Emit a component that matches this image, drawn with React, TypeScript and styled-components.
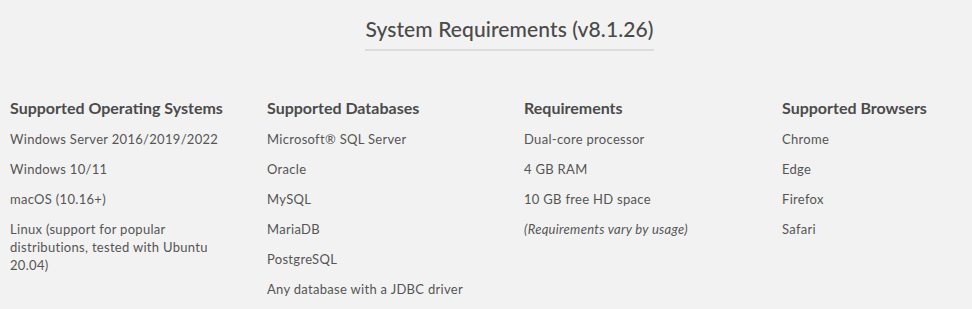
import React from "react";
import styled, { createGlobalStyle } from "styled-components";

const GlobalStyle = createGlobalStyle`
  html, body {
    margin: 0;
    padding: 0;
    background: #f2f2f2;
    overflow: hidden;
  }
  body {
    font-family: Lato, "Liberation Sans", sans-serif;
    color: #555;
  }
`;

const Section = styled.section`
  width: 1019px;
  padding-top: 15px;
`;

const TitleWrap = styled.div`
  display: flex;
  justify-content: center;
`;

const Title = styled.h2`
  margin: 0;
  padding-bottom: 6px;
  font-size: 21px;
  font-weight: 500;
  line-height: 28px;
  letter-spacing: 0.1px;
  color: #4a4a4a;
  border-bottom: 2px solid #dcdcdc;
`;

const Grid = styled.div`
  display: grid;
  grid-template-columns: 257px 257px 258px 257px;
  padding: 0 0 0 10px;
  margin-top: 47px;
`;

const Column = styled.div`
  display: flex;
  flex-direction: column;
`;

const Heading = styled.h3`
  margin: 0 0 12px;
  font-size: 16px;
  font-weight: 700;
  line-height: 20px;
  color: #4b4b4b;
`;

const Item = styled.div<{ $italic?: boolean }>`
  max-width: 212px;
  font-size: 13px;
  line-height: 18px;
  letter-spacing: 0.3px;
  margin-bottom: 12px;
  font-style: ${(p) => (p.$italic ? "italic" : "normal")};
`;

const columns = [
  {
    title: "Supported Operating Systems",
    items: [
      "Windows Server 2016/2019/2022",
      "Windows 10/11",
      "macOS (10.16+)",
      "Linux (support for popular distributions, tested with Ubuntu 20.04)",
    ],
  },
  {
    title: "Supported Databases",
    items: [
      "Microsoft® SQL Server",
      "Oracle",
      "MySQL",
      "MariaDB",
      "PostgreSQL",
      "Any database with a JDBC driver",
    ],
  },
  {
    title: "Requirements",
    items: ["Dual-core processor", "4 GB RAM", "10 GB free HD space"],
    note: "(Requirements vary by usage)",
  },
  {
    title: "Supported Browsers",
    items: ["Chrome", "Edge", "Firefox", "Safari"],
  },
];

const App = () => {
  return (
    <>
      <GlobalStyle />
      <Section>
        <TitleWrap>
          <Title>System Requirements (v8.1.26)</Title>
        </TitleWrap>
        <Grid>
          {columns.map((col) => (
            <Column key={col.title}>
              <Heading>{col.title}</Heading>
              {col.items.map((item) => (
                <Item key={item}>{item}</Item>
              ))}
              {col.note && <Item $italic>{col.note}</Item>}
            </Column>
          ))}
        </Grid>
      </Section>
    </>
  );
};

export default App;
